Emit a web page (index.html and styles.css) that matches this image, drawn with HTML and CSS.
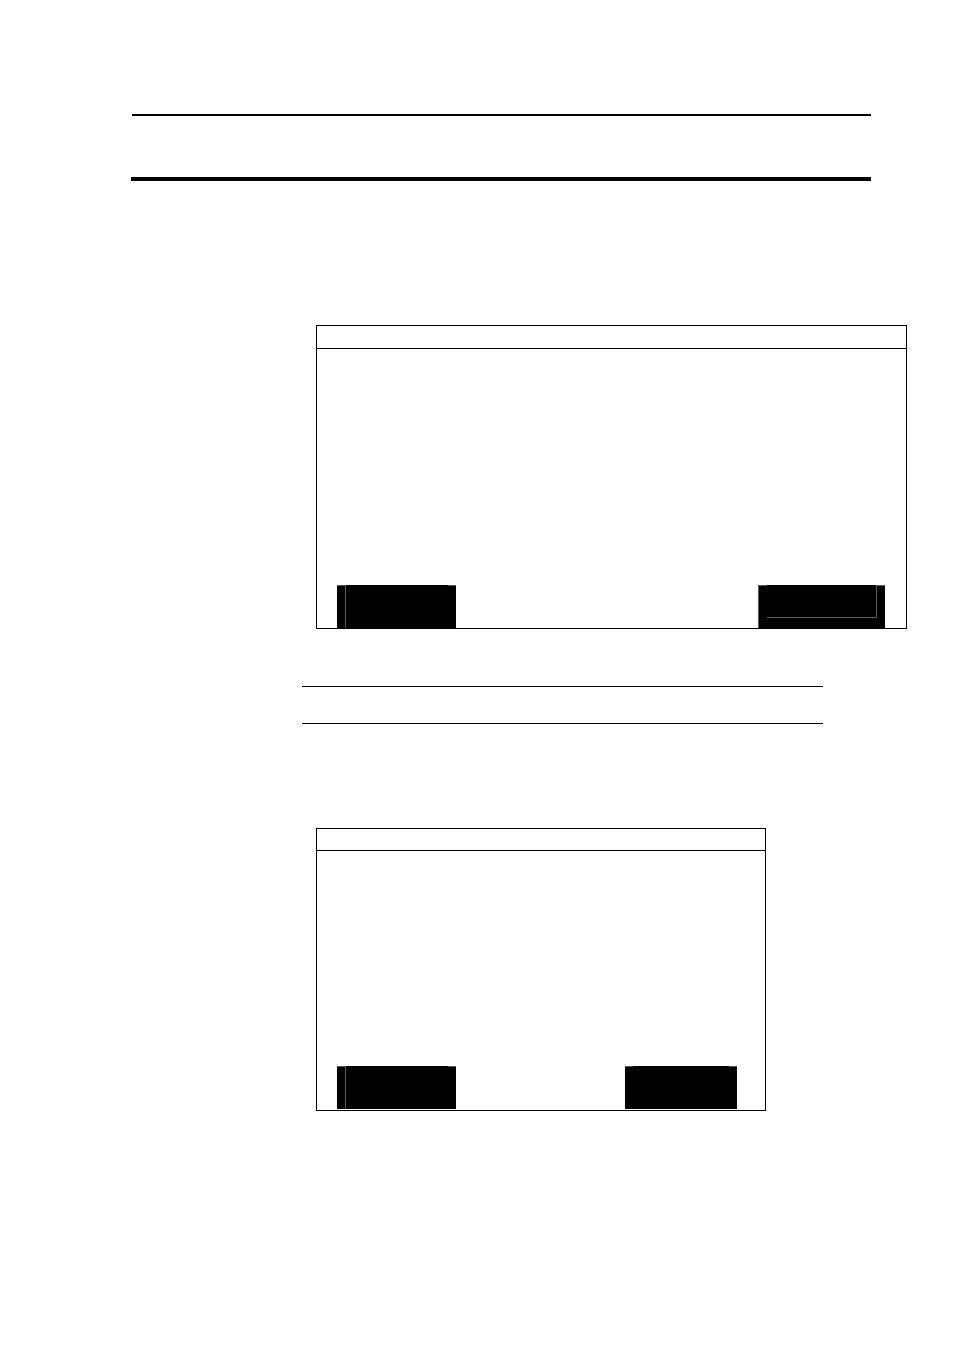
FILE: index.html
```html
<!DOCTYPE html>
<html lang="en">
<head>
<meta charset="utf-8">
<meta name="viewport" content="width=device-width, initial-scale=1">
<title>Display panels</title>
<link rel="stylesheet" href="styles.css">
</head>
<body>
<header class="page-header"><div class="header-rule"></div></header>
<main class="content">
  <section class="panel panel-wide">
    <div class="panel-title"></div>
    <div class="panel-body">
      <button type="button" class="key key-split" aria-label="Left key"><span class="edge"></span><span class="face"></span><span class="edge"></span></button>
      <button type="button" class="key key-framed" aria-label="Right key"><span class="edge"></span><span class="face"></span><span class="edge"></span></button>
    </div>
  </section>
  <aside class="note"></aside>
  <section class="panel panel-narrow">
    <div class="panel-title"></div>
    <div class="panel-body">
      <button type="button" class="key key-split" aria-label="Left key"><span class="edge"></span><span class="face"></span><span class="edge"></span></button>
      <button type="button" class="key key-plain" aria-label="Right key"><span class="edge"></span><span class="face"></span><span class="edge"></span></button>
    </div>
  </section>
</main>
</body>
</html>
```
FILE: styles.css
```css
* {
  box-sizing: border-box;
}

body {
  margin: 0;
  padding: 114px 0 240px;
  background: #fff;
  color: #000;
  font-family: "Liberation Sans", Arial, sans-serif;
}

.page-header {
  min-height: 67px;
  margin: 0 83px 0 131px;
  border-bottom: 4px solid #000;
}

.header-rule {
  margin-left: 1px;
  border-top: 2px solid #000;
}

.content {
  display: flex;
  flex-direction: column;
  padding: 144px 47px 0 302px;
}

.panel {
  margin-left: 14px;
  border: 1px solid #000;
}

.panel-title {
  min-height: 23px;
  border-bottom: 1px solid #000;
}

.panel-body {
  display: flex;
  justify-content: space-between;
  align-items: flex-end;
  min-height: 279px;
  padding: 0 21px 0 20px;
}

.panel-narrow {
  margin-right: 141px;
}

.panel-narrow .panel-title {
  min-height: 22px;
}

.panel-narrow .panel-body {
  min-height: 259px;
  padding: 0 28px 1px 20px;
}

.note {
  min-height: 38px;
  margin: 57px 84px 104px 0;
  border: solid #000;
  border-width: 1px 0;
}

.key {
  display: grid;
  grid-template-columns: 8px 1fr 8px;
  grid-template-rows: 33px 10px;
  width: 119px;
  padding: 0;
  border: 0;
  background: #000;
}

.edge,
.face {
  grid-row: 1 / 3;
}

.edge {
  border-top: 1px solid #5a5a5a;
}

.key-split .face {
  border-left: 1px solid #5a5a5a;
}

.key-framed {
  grid-template-columns: 9px 1fr 9px;
  width: 127px;
}

.key-framed .edge:first-child {
  border-left: 1px solid #5a5a5a;
}

.key-framed .face {
  grid-row: 1;
  border-bottom: 1px solid #5a5a5a;
}

.key-framed .edge:last-child {
  grid-row: 1;
  border-left: 1px solid #5a5a5a;
}

.key-plain {
  width: 112px;
}
```
